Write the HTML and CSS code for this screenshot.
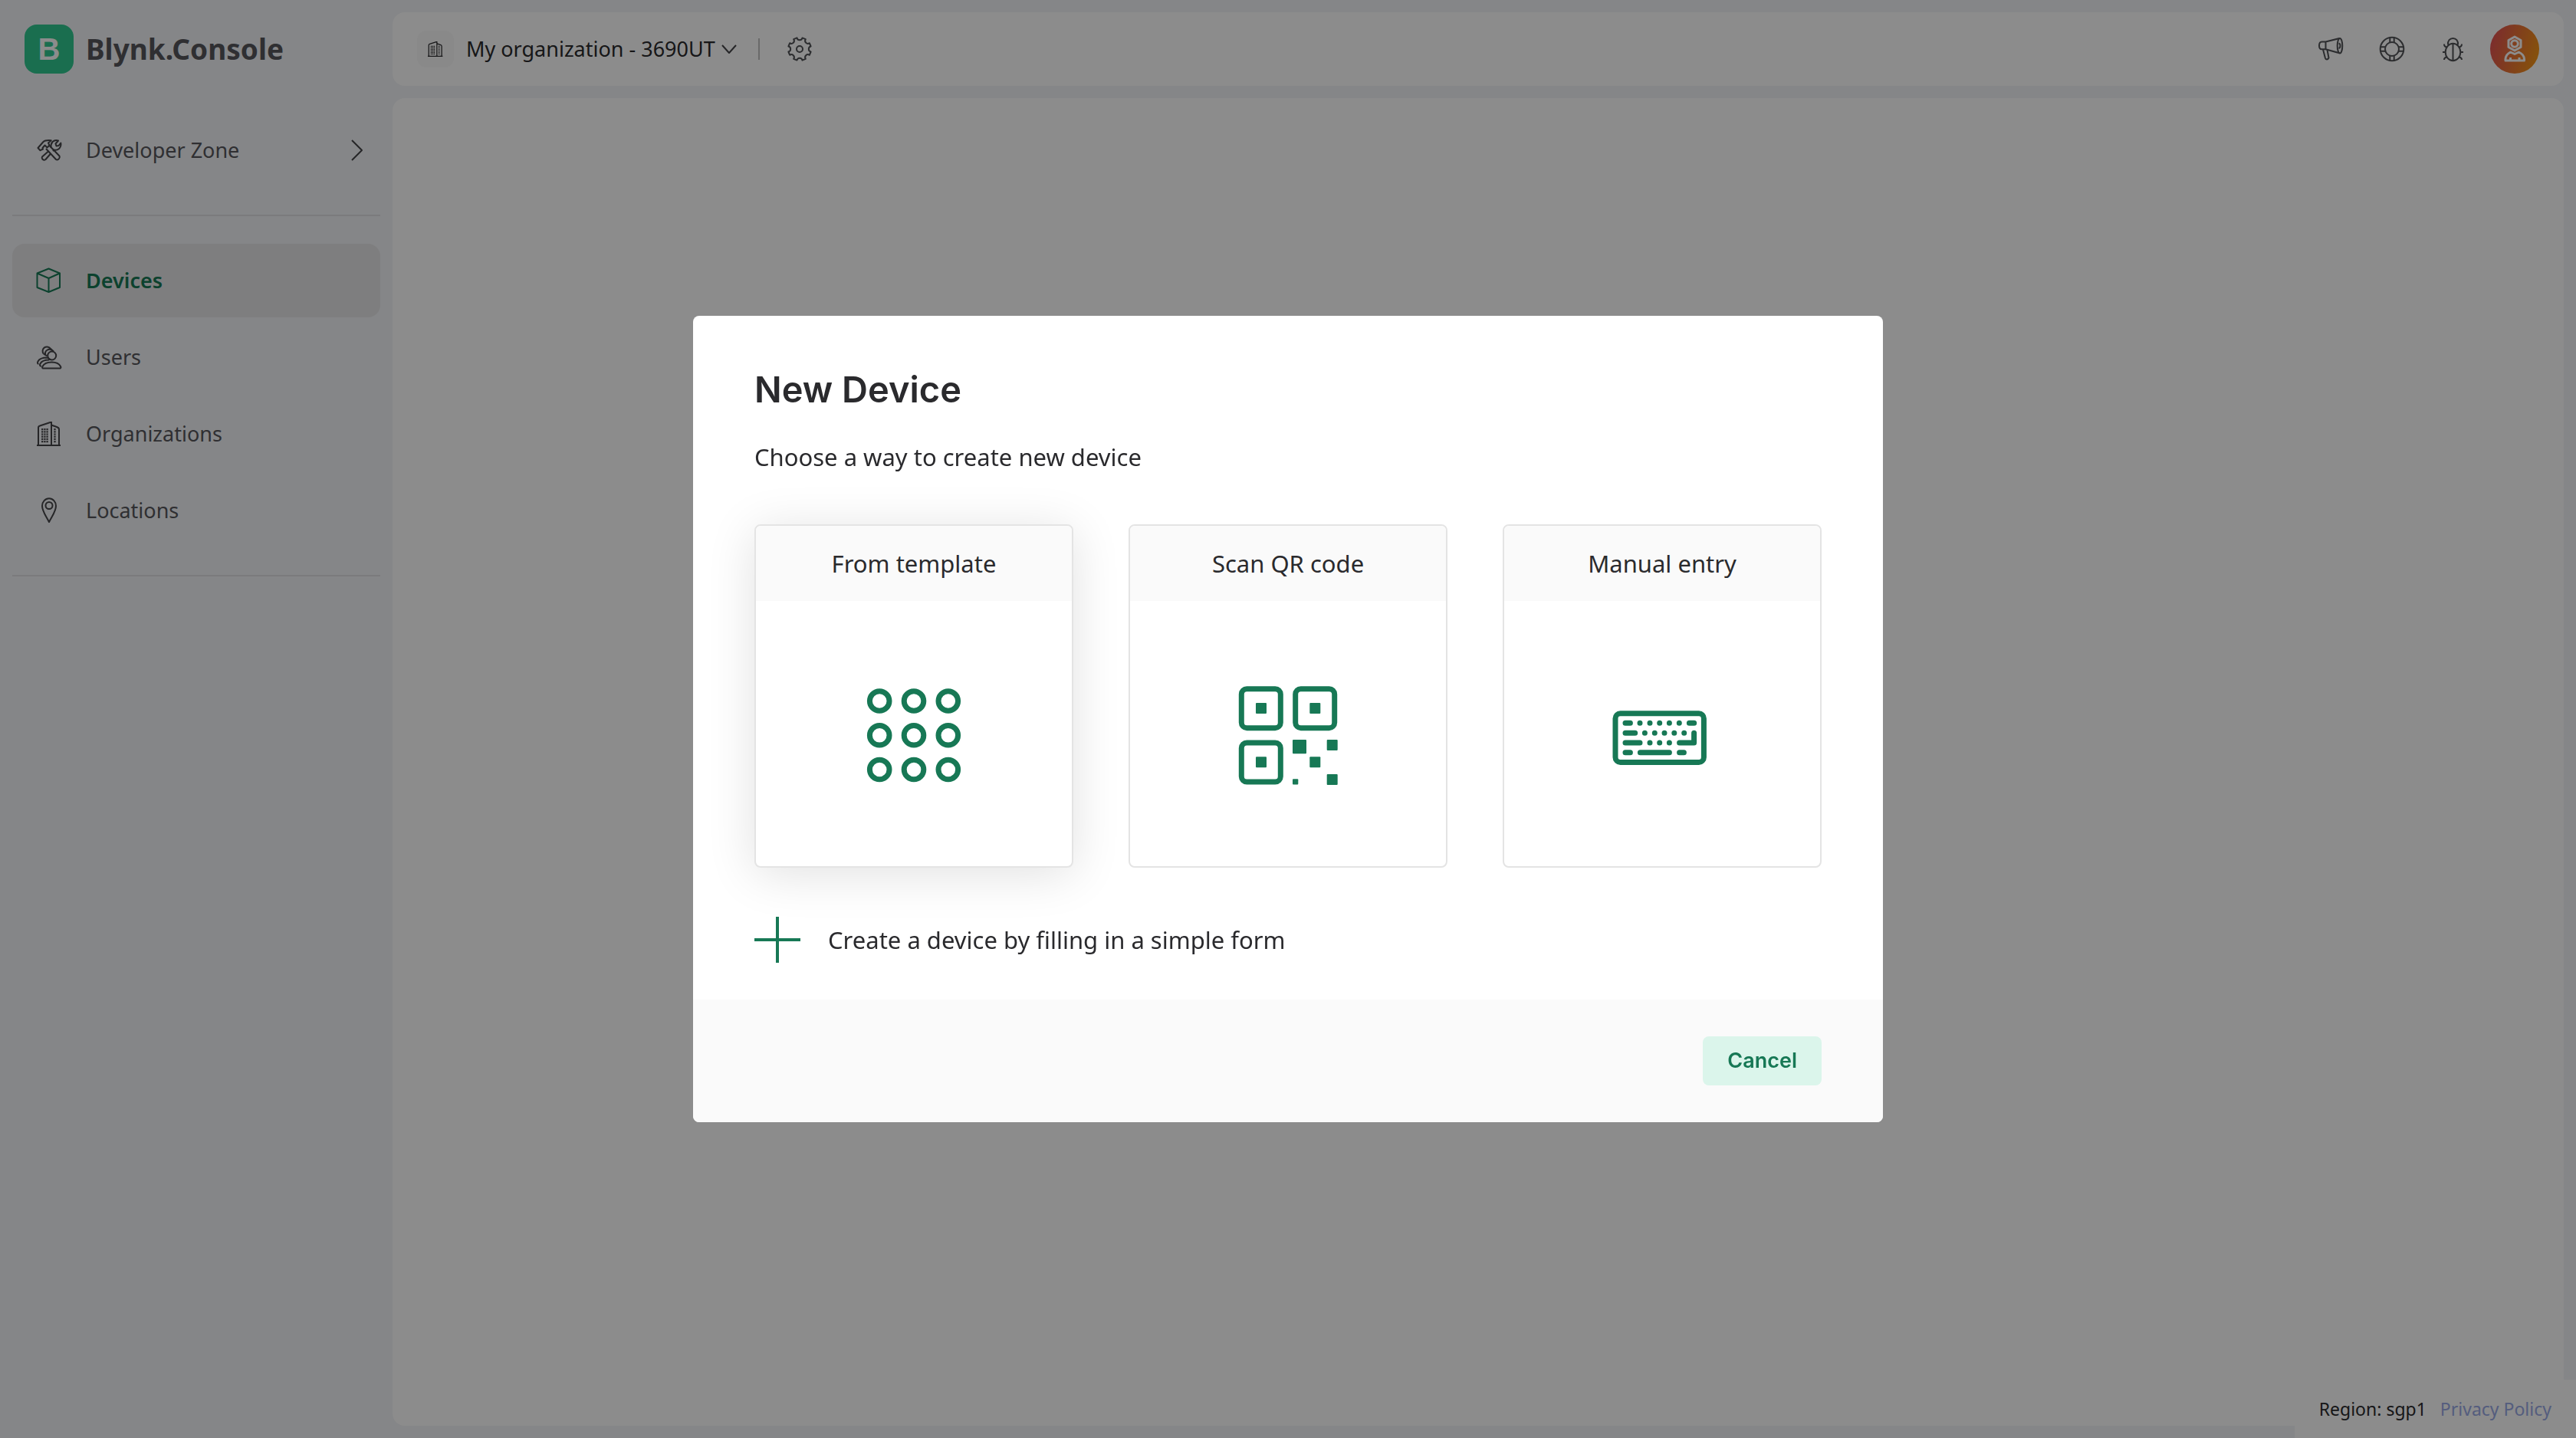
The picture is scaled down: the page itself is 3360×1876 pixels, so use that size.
FILE: index.html
```html
<!DOCTYPE html>
<html lang="en">
<head>
  <meta charset="utf-8">
  <meta name="viewport" content="width=device-width, initial-scale=1">
  <title>Blynk.Console</title>
  <link rel="stylesheet" href="styles.css">
</head>
<body>
  <svg class="symbols" aria-hidden="true">
    <symbol id="building" viewBox="0 0 32 32">
      <path d="M0 31H31M2 31V8Q2 6 4 5.5L19 .5V31M19 4.5L26 7Q29 8 29 10V31" fill="none" stroke="currentColor" stroke-width="2"/>
      <path d="M7.200 9V27.500M10.400 9V27.500M13.600 9V27.500M23.500 9V27.500" fill="none" stroke="currentColor" stroke-width="2.200" stroke-dasharray="2.200 1"/>
    </symbol>
  </svg>

  <div class="app">
    <aside class="sidebar">
      <a class="brand" href="#">
        <span class="brand-mark">B</span>
        <span class="brand-name">Blynk.Console</span>
      </a>

      <nav class="nav">
        <a class="nav-item" href="#">
          <svg class="icon" viewBox="0 0 32 32">
            <path d="M1.500 13L8.500 5Q11 2.500 18.700 3.200L15 6.500L16.500 9.500L13.500 12.500L10.500 9.500L7.500 13L8 14.500L4.500 16.200Z"/>
            <path d="M16.500 10L29.500 23.500Q30.500 25 29 27Q27 29.500 25 28L12 14"/>
            <path d="M18.500 12.500Q18 8 20.500 5Q24 1.800 28 3.500L24.500 7.500L25.500 10.500L28.500 10L31.300 6.500Q32 11 29 14Q26 16.500 22.500 15.500L21 17M15 17.500L7 24.500Q6 26 7.500 27.800Q9.500 29.700 11.500 28L18 20.500"/>
          </svg>
          <span class="nav-label">Developer Zone</span>
          <svg class="chevron" viewBox="0 0 16 28"><path d="M1 1L14 14L1 27"/></svg>
        </a>

        <hr class="divider">

        <a class="nav-item active" href="#" aria-current="page">
          <svg class="icon" viewBox="0 0 32 32"><path d="M15.500 .5L30 6.500V25L15.500 31L.5 25V6.500ZM.5 6.500L15.500 13L30 6.500M15.500 13V31"/></svg>
          <span class="nav-label">Devices</span>
        </a>
        <a class="nav-item" href="#">
          <svg class="icon" viewBox="0 0 32 32">
            <circle cx="19.700" cy="14" r="5.500"/>
            <path d="M8.800 11.500A5.500 5.500 0 1 1 17.500 4.500M11.500 13.500A5.500 5.500 0 0 1 20.500 7.500M9 11.500Q10 12.500 13.500 14.500M17.500 4.500L22 8.500"/>
            <path d="M8 30.500H30.500Q32 30 31 28C29 24 24 22.500 19.500 22.500C13 22.500 9 25 7.500 28Q6.500 30 8 30.500Z"/>
            <path d="M13.500 16.500C7 16.500 3 18.500 1.500 21.500Q0 24.500 2.500 24.800M16 19.500C10 19.500 6 21.500 4.500 24.500Q3 27.500 6 27.800M13.500 16.500L18.500 19.500"/>
          </svg>
          <span class="nav-label">Users</span>
        </a>
        <a class="nav-item" href="#">
          <svg class="icon"><use href="#building"/></svg>
          <span class="nav-label">Organizations</span>
        </a>
        <a class="nav-item" href="#">
          <svg class="icon" viewBox="0 0 32 32"><path d="M16 31C12 23 7 17 7 10A9 9.800 0 0 1 25 10C25 17 20 23 16 31Z"/><circle cx="16" cy="9.500" r="4.500"/></svg>
          <span class="nav-label">Locations</span>
        </a>

        <hr class="divider">
      </nav>
    </aside>

    <div class="page">
      <header class="topbar">
        <button class="org-switch" type="button">
          <span class="org-mark"><svg class="org-icon"><use href="#building"/></svg></span>
          <span class="org-name">My organization - 3690UT</span>
          <svg class="caret" viewBox="0 0 20 12"><path d="M1 1L10 11L19 1"/></svg>
        </button>
        <span class="separator"></span>
        <button class="tool" type="button" aria-label="Settings">
          <svg class="icon" viewBox="-16 -16 32 32">
            <path d="M-3.500-14.600A3.600 3.600 0 0 0 3.500-14.600L7.800-12.800A3.600 3.600 0 0 0 12.800-7.800L14.600-3.500A3.600 3.600 0 0 0 14.600 3.500L12.800 7.800A3.600 3.600 0 0 0 7.800 12.800L3.500 14.600A3.600 3.600 0 0 0-3.500 14.600L-7.800 12.800A3.600 3.600 0 0 0-12.800 7.800L-14.600 3.500A3.600 3.600 0 0 0-14.600-3.500L-12.800-7.800A3.600 3.600 0 0 0-7.800-12.800Z"/>
            <circle r="4"/>
          </svg>
        </button>

        <div class="actions">
          <button class="tool" type="button" aria-label="Announcements">
            <svg class="icon" viewBox="0 0 32 32">
              <path d="M9.500 6.500H4.500Q1 6.500 1 11.500T4.500 16.300H9.500M9.500 6.500V16.300M9.500 6.500L27.500 2M9.500 16.300L27.500 21.300"/>
              <ellipse cx="28" cy="11.700" rx="3.300" ry="9.800"/>
              <path d="M26.500 8.500Q28.500 8.800 28.500 11.700T26.500 15M6 16.500L9 28Q9.500 29.500 11 29.500T13.500 27.500L11.500 17"/>
            </svg>
          </button>
          <button class="tool" type="button" aria-label="Help">
            <svg class="icon" viewBox="0 0 32 32">
              <circle cx="16" cy="16" r="15.300"/><circle cx="16" cy="16" r="9"/>
              <path d="M13.300 1V7.500M18.700 1V7.500M13.300 24.500V31M18.700 24.500V31M1 13.300H7.500M1 18.700H7.500M24.500 13.300H31M24.500 18.700H31"/>
            </svg>
          </button>
          <button class="tool" type="button" aria-label="Report a bug">
            <svg class="icon" viewBox="0 0 32 32">
              <ellipse cx="15.500" cy="20" rx="9.800" ry="11.200"/>
              <path d="M9 10.500C8.500 5 11.500 2 15.500 2S22.500 5 22 10.500M15.500 9V31M2 20H5.500M25.500 20H29M4 9.500Q4 13 7.500 13.500M27 9.500Q27 13 23.500 13.500M4 30Q4 27 7.500 26.500M27 30Q27 27 23.500 26.500"/>
            </svg>
          </button>
          <button class="avatar" type="button" aria-label="Account">
            <svg class="avatar-icon" viewBox="0 0 64 64">
              <path d="M32 16L40 20.500V29.500L32 34L24 29.500V20.500Z"/><circle cx="32" cy="25" r="4.300"/>
              <path d="M26.500 36L32 38.500L37.500 36Q44 39 44.500 45V47H20V45Q20.500 39 26.500 36ZM26.500 43V46M38 43V46"/>
            </svg>
          </button>
        </div>
      </header>
      <main class="content"></main>
    </div>
  </div>

  <footer class="legal">
    <span>Region: sgp1</span>
    <a class="legal-link" href="#">Privacy Policy</a>
  </footer>

  <div class="overlay">
    <section class="modal" role="dialog" aria-modal="true" aria-labelledby="modal-title">
      <div class="modal-body">
        <h1 class="modal-title" id="modal-title">New Device</h1>
        <p class="modal-text">Choose a way to create new device</p>

        <div class="cards">
          <button class="card raised" type="button">
            <span class="card-title">From template</span>
            <span class="card-body">
              <svg class="card-icon" viewBox="0 0 144 144">
                <circle cx="27.200" cy="29.500" r="12.800"/><circle cx="72" cy="29.500" r="12.800"/><circle cx="116.800" cy="29.500" r="12.800"/>
                <circle cx="27.200" cy="74.300" r="12.800"/><circle cx="72" cy="74.300" r="12.800"/><circle cx="116.800" cy="74.300" r="12.800"/>
                <circle cx="27.200" cy="119" r="12.800"/><circle cx="72" cy="119" r="12.800"/><circle cx="116.800" cy="119" r="12.800"/>
              </svg>
            </span>
          </button>
          <button class="card" type="button">
            <span class="card-title">Scan QR code</span>
            <span class="card-body">
              <svg class="card-icon" viewBox="0 0 144 144">
                <rect x="11.300" y="13.700" width="51" height="51" rx="7"/>
                <rect x="81.700" y="13.700" width="51" height="51" rx="7"/>
                <rect x="11.300" y="84" width="51" height="51" rx="7"/>
                <g class="solid">
                  <rect x="30" y="32" width="14" height="14" rx="1"/>
                  <rect x="100.300" y="32" width="14" height="14" rx="1"/>
                  <rect x="30" y="102.300" width="14" height="14" rx="1"/>
                  <rect x="78" y="80" width="18" height="18.300" rx="1"/>
                  <rect x="122.700" y="80" width="14" height="14" rx="1"/>
                  <rect x="100.300" y="102.300" width="14" height="14" rx="1"/>
                  <rect x="78" y="131.300" width="7.300" height="7.300" rx="1"/>
                  <rect x="122.700" y="125" width="14" height="14" rx="1"/>
                </g>
              </svg>
            </span>
          </button>
          <button class="card" type="button">
            <span class="card-title">Manual entry</span>
            <span class="card-body">
              <svg class="card-icon" viewBox="0 0 144 144">
                <rect x="11" y="45.700" width="115.400" height="63.700" rx="6.500"/>
                <path stroke-linecap="round" d="M24 58.300H30.400M43 58.300h.01M56 58.300h.01M68.700 58.300h.01M81.400 58.300h.01M94.300 58.300h.01M107.400 58.300H113.700M24 71.200H36.700M49.400 71.200h.01M62.300 71.200h.01M75 71.200h.01M87.800 71.200h.01M100.700 71.200h.01M113.600 71.200V84H94.600M24 84H43M56 84h.01M68.700 84h.01M81.400 84h.01M24 96.800H30.400M43.400 96.800H81.400M94.600 96.800H100.400"/>
              </svg>
            </span>
          </button>
        </div>

        <button class="create" type="button">
          <svg class="plus" viewBox="0 0 60 60"><path d="M0 30H60M30 0V60"/></svg>
          <span>Create a device by filling in a simple form</span>
        </button>
      </div>
      <div class="modal-footer">
        <button class="cancel" type="button">Cancel</button>
      </div>
    </section>
  </div>
</body>
</html>
```
FILE: styles.css
```css
:root {
  --green: #177855;
  --ink: #2a2a2d;
  --text: "Noto Sans", "Open Sans", sans-serif;
  --display: Inter, "Liberation Sans", sans-serif;
}

* { box-sizing: border-box; }

body {
  margin: 0;
  font-family: var(--text);
  font-size: 27px;
  line-height: 40px;
  color: var(--ink);
  background: #f2f4f7;
}

button {
  margin: 0;
  padding: 0;
  border: 0;
  background: none;
  font: inherit;
  color: inherit;
  cursor: pointer;
}

a { color: inherit; text-decoration: none; }

svg {
  display: block;
  flex: none;
  overflow: visible;
  fill: none;
  stroke: currentColor;
  stroke-width: 2;
  stroke-linejoin: round;
}

.symbols { display: none; }
.icon { width: 32px; height: 32px; }

/* Shell */
.app {
  display: grid;
  grid-template-columns: 512px 1fr;
  min-height: 100vh;
}

.sidebar { padding: 32px 16px; }

.brand {
  display: flex;
  align-items: center;
  gap: 16px;
  margin-bottom: 52px;
  padding-left: 16px;
  font-size: 37px;
  font-weight: 700;
  color: #57575c;
}

.brand-mark {
  display: grid;
  place-items: center;
  width: 64px;
  height: 64px;
  border-radius: 16px;
  background: #30c890;
  color: #fff;
  font-family: "Liberation Sans", Arial, sans-serif;
  font-size: 40px;
}

.nav {
  display: flex;
  flex-direction: column;
  gap: 4px;
}

.nav-item {
  display: flex;
  align-items: center;
  gap: 32px;
  height: 96px;
  padding: 0 22px 0 32px;
  border-radius: 16px;
  color: #57575c;
}

.nav-item .icon, .chevron { color: #454549; }
.nav-label { flex: 1; }
.chevron { width: 16px; height: 28px; }

.nav-item.active {
  background: #e6e6e8;
  color: var(--green);
  font-weight: 600;
}

.nav-item.active .icon { color: var(--green); }

.divider {
  width: 100%;
  height: 2px;
  margin: 32px 0;
  border: 0;
  background: #e0e1e4;
}

.page {
  display: flex;
  flex-direction: column;
  gap: 16px;
  padding: 16px 16px 16px 0;
}

.topbar {
  display: flex;
  align-items: center;
  height: 96px;
  padding: 0 32px;
  border-radius: 16px;
  background: #fff;
}

.content {
  flex: 1;
  border-radius: 16px;
  background: #fff;
}

.org-switch { display: flex; align-items: center; }

.org-mark {
  display: grid;
  place-items: center;
  width: 48px;
  height: 48px;
  margin-right: 16px;
  border-radius: 12px;
  background: #fafafa;
}

.org-icon { width: 20px; height: 20px; }

.caret {
  width: 20px;
  height: 12px;
  margin-left: 8px;
  color: #454549;
}

.separator {
  width: 2px;
  height: 28px;
  margin: 0 36px 0 28px;
  background: #c0c0c0;
}

.tool { color: #505256; }

.actions {
  display: flex;
  align-items: center;
  gap: 48px;
  margin-left: auto;
}

.avatar {
  width: 64px;
  height: 64px;
  margin-left: -16px;
  border-radius: 50%;
  background: linear-gradient(105deg, #e04c58, #f59c10);
  color: #fff;
}

.avatar-icon {
  width: 64px;
  height: 64px;
  stroke-width: 3;
}

.legal {
  position: fixed;
  right: 0;
  bottom: 0;
  display: flex;
  align-items: center;
  gap: 18px;
  height: 76px;
  padding: 0 32px;
  background: #fff;
  font-size: 23px;
}

.legal-link { color: #99a9e6; }

/* Dialog */
.overlay {
  position: fixed;
  inset: 0;
  display: grid;
  place-items: center;
  background: rgba(0, 0, 0, .45);
}

.modal {
  width: 1552px;
  max-width: 100%;
  overflow: hidden;
  border-radius: 8px;
  background: #fff;
  font-size: 31px;
}

.modal-body { padding: 64px 80px 48px; }

.modal-title {
  margin: 0;
  font-family: var(--display);
  font-size: 47px;
  line-height: 64px;
  font-weight: 600;
}

.modal-text { margin: 36px 0 68px; }

.cards {
  display: grid;
  grid-template-columns: repeat(3, 1fr);
  gap: 72px;
}

.card {
  display: flex;
  flex-direction: column;
  height: 448px;
  border: 2px solid #e4e4e4;
  border-radius: 8px;
  overflow: hidden;
  background: #fff;
}

.raised { box-shadow: 0 8px 64px rgba(0, 0, 0, .12); }

.card-title {
  width: 100%;
  padding: 29px 0;
  background: #fafafa;
}

.card-body {
  display: grid;
  flex: 1;
  place-items: center;
  width: 100%;
}

.card-icon {
  width: 144px;
  height: 144px;
  color: var(--green);
  stroke-width: 7;
}

.solid { fill: currentColor; stroke: none; }

.create {
  display: flex;
  align-items: center;
  gap: 36px;
  margin-top: 64px;
}

.plus {
  width: 60px;
  height: 60px;
  color: var(--green);
  stroke-width: 4;
}

.modal-footer {
  display: flex;
  justify-content: flex-end;
  padding: 48px 80px;
  background: #fafafa;
}

.cancel {
  height: 64px;
  padding: 0 32px;
  border-radius: 8px;
  background: #dbf5eb;
  color: var(--green);
  font-family: var(--display);
  font-size: 27px;
  font-weight: 600;
}
```
